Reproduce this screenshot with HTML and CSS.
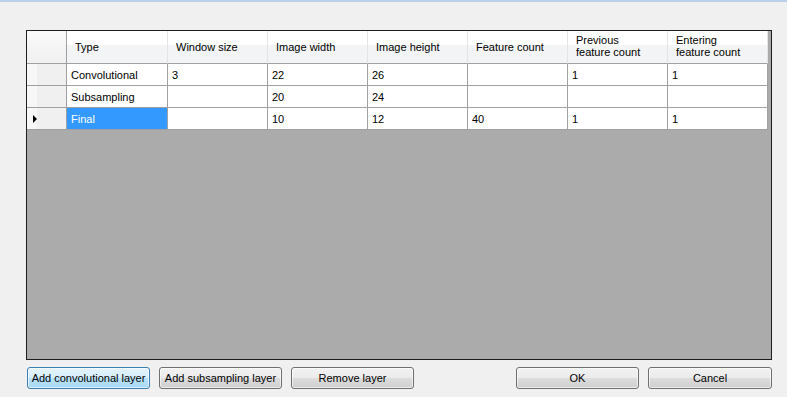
FILE: index.html
```html
<!DOCTYPE html>
<html lang="en">
<head>
  <meta charset="UTF-8">
  <title>Layers</title>
  <link rel="stylesheet" href="styles.css">
</head>
<body>
  <div class="window">
    <div class="grid">
      <table class="layers">
        <thead>
          <tr>
            <th class="rowhead"></th>
            <th class="first">Type</th>
            <th>Window size</th>
            <th>Image width</th>
            <th>Image height</th>
            <th>Feature count</th>
            <th class="two">Previous<br>feature count</th>
            <th class="two">Entering<br>feature count</th>
          </tr>
        </thead>
        <tbody>
          <tr>
            <td class="rowhead"></td>
            <td>Convolutional</td>
            <td>3</td>
            <td>22</td>
            <td>26</td>
            <td></td>
            <td>1</td>
            <td>1</td>
          </tr>
          <tr>
            <td class="rowhead"></td>
            <td>Subsampling</td>
            <td></td>
            <td>20</td>
            <td>24</td>
            <td></td>
            <td></td>
            <td></td>
          </tr>
          <tr>
            <td class="rowhead current"><span class="arrow"></span></td>
            <td class="selected">Final</td>
            <td></td>
            <td>10</td>
            <td>12</td>
            <td>40</td>
            <td>1</td>
            <td>1</td>
          </tr>
        </tbody>
      </table>
    </div>

    <div class="buttons">
      <button class="btn default">Add convolutional layer</button>
      <button class="btn">Add subsampling layer</button>
      <button class="btn">Remove layer</button>
      <div class="spacer"></div>
      <button class="btn">OK</button>
      <button class="btn wide">Cancel</button>
    </div>
  </div>
</body>
</html>
```

FILE: styles.css
```css
body { margin: 0; background: #f0f0f0; font-family: "Liberation Sans", Arial, sans-serif; font-size: 11px; color: #000; }
.window { border-top: 2px solid #b9d1ea; height: 395px; }

.grid { margin: 28px 0 0 26px; width: 744px; height: 328px; border: 1px solid #1e1e1e; background: #ababab; overflow: hidden; }
.layers { border-collapse: separate; border-spacing: 0; table-layout: fixed; width: 741px; }
.layers th, .layers td { width: 95px; padding: 0 0 0 4px; border-right: 1px solid #a0a0a0; border-bottom: 1px solid #a0a0a0; text-align: left; font-weight: normal; white-space: nowrap; overflow: hidden; }
.layers th { height: 32px; padding-left: 8px; width: 91px; background: linear-gradient(#ffffff 0, #ffffff 45%, #f3f4f6 45%, #f3f4f6 100%); border-right: 1px solid #e3e4e6; line-height: 12px; }
.layers th.first { width: 92px; }
.layers th.two { padding-top: 3px; height: 29px; vertical-align: top; }
.layers td { height: 21px; background: #fff; }
.layers .rowhead { width: 39px; padding: 0; background: linear-gradient(90deg, #f7f7f7 0, #f7f7f7 25%, #f0f0f0 25%); border-right-color: #a0a0a0; }
.layers th.rowhead { background: linear-gradient(#fafafa, #f0f0f0); }
.layers td.selected { background: #3399ff; color: #fff; }

.arrow { display: block; margin-left: 6px; width: 0; height: 0; border-top: 4px solid transparent; border-bottom: 4px solid transparent; border-left: 4px solid #000; }

.buttons { display: flex; gap: 9px; margin: 7px 15px 0 27px; }
.spacer { flex: 1; }
.btn { width: 123px; height: 22px; padding: 0; border: 1px solid #707070; border-radius: 3px; font-family: "Liberation Sans", Arial, sans-serif; font-size: 11px; color: #000; background: linear-gradient(#f2f2f2 0, #ebebeb 50%, #dddddd 50%, #cfcfcf 100%); box-shadow: inset 0 0 0 1px rgba(255,255,255,0.6); }
.btn.wide { width: 124px; }
.btn.default { border-color: #3c7fb1; background: linear-gradient(#e5f4fc 0, #d4eefc 50%, #b9e2f8 50%, #a7d9f5 100%); }
```
